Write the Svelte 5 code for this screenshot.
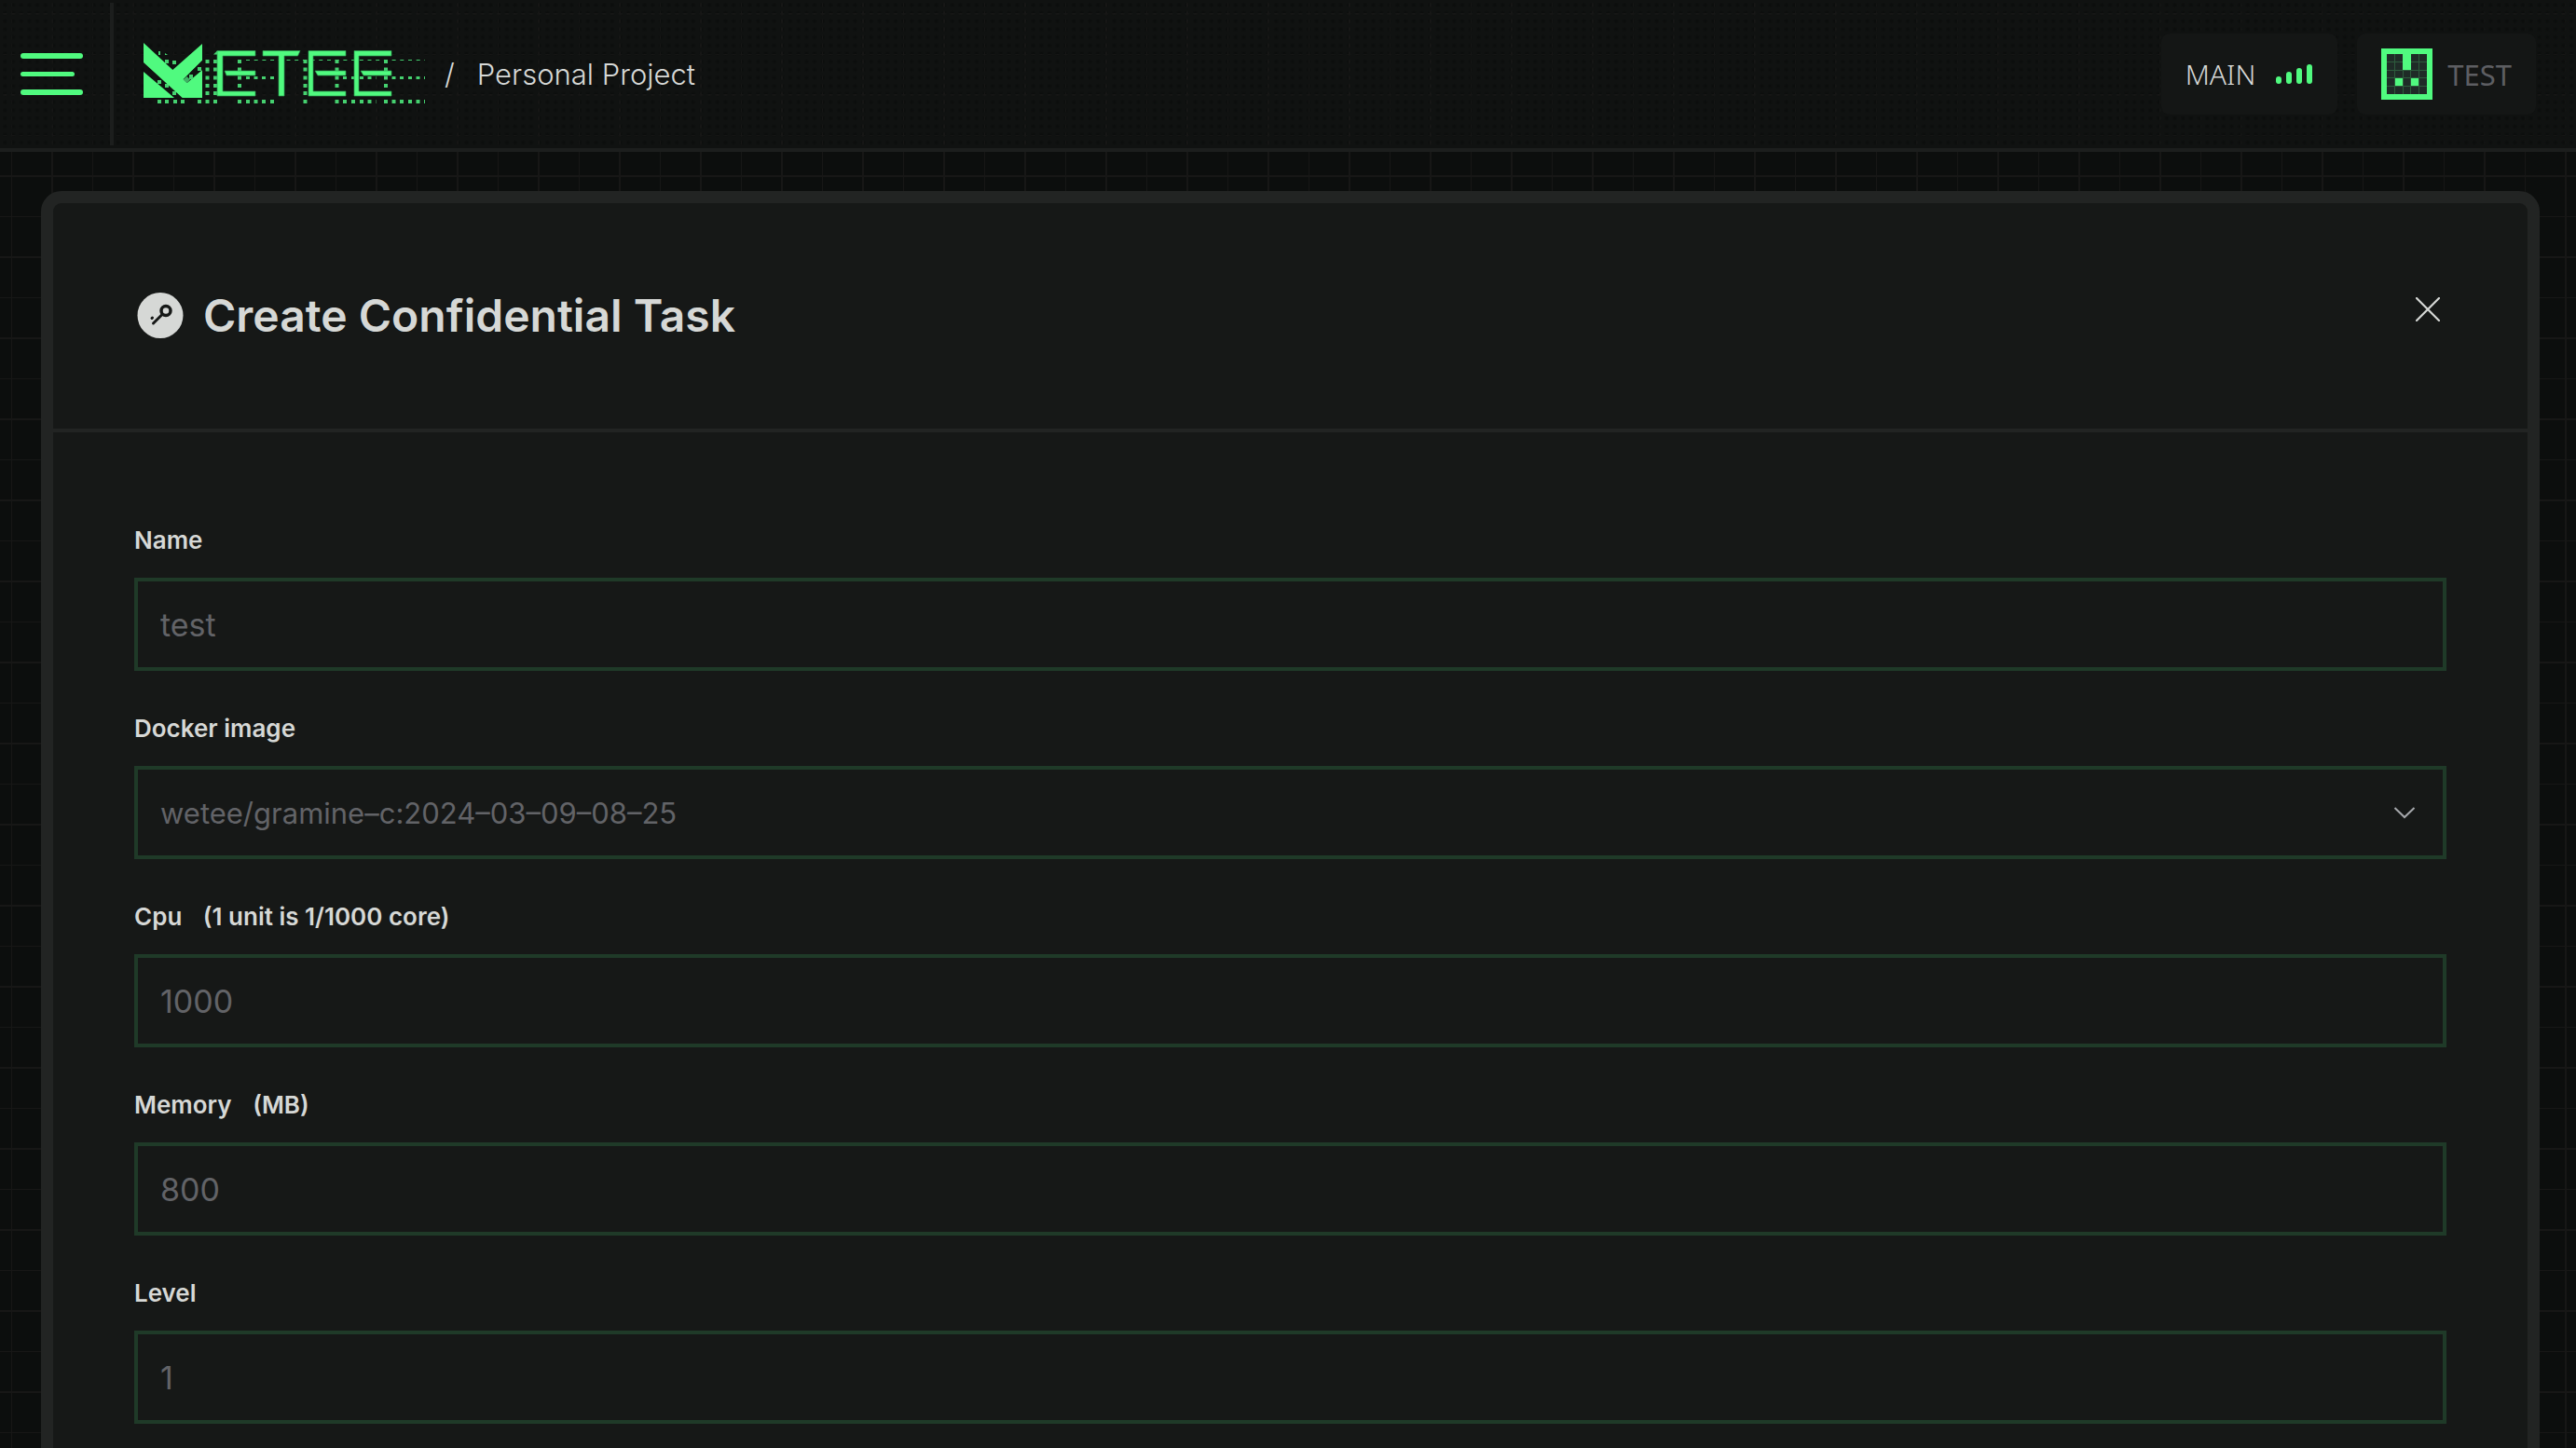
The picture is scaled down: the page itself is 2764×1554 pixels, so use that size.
<script>
  let name = $state('');
  let cpu = $state('');
  let memory = $state('');
  let level = $state('');
  let image = $state('wetee/gramine-c:2024-03-09-08-25');

  // Centres of the small squares that trail behind the logo
  const columns = [222.5, 231, 257, 327.5, 361.5, 414];
  const columnRows = [66, 74.5, 83.5, 92, 100];
  const baseline = [171, 179, 188, 196, 214, 222.5, 231, 257, 266, 274.5, 283, 292, 327.5, 361.5, 370, 379, 388, 396.5, 414, 422.5, 431, 440, 448.5];
  const middle = [266, 274.5, 283, 292, 370, 379, 388, 396.5, 422.5, 431, 440, 448.5];
  const scattered = [[179, 66], [187, 67], [171, 88], [179, 92], [187, 100], [214, 74], [205, 82]];
</script>

<div class="page">
  <header class="topbar">
    <button class="menu" aria-label="Menu">
      <svg width="68" height="46" viewBox="0 0 68 46"><g fill="#50fa7f"><rect width="67" height="6" rx="3" /><rect y="20" width="58" height="5" rx="2.5" /><rect y="39" width="67" height="6" rx="3" /></g></svg>
    </button>
    <a class="logo" href="/" aria-label="WETEE home">
      <svg width="304" height="69" viewBox="154 45 304 69">
        <g fill="#45d06f">
          {#each baseline as x}<rect x={x - 2} y="107" width="4" height="4" />{/each}
          {#each columns as x}
            {#each columnRows as y}<rect x={x - 2} y={y - 2} width="4" height="4" />{/each}
          {/each}
          {#each middle as x}<rect x={x - 2} y="82" width="4" height="3" />{/each}
          {#each scattered as [x, y]}<rect x={x - 2} y={y - 2} width="4" height="4" />{/each}
          <path d="M170 55h2v4h-2zM177 57l3 2h-3zM455 107h1v4h-1zM455 82h1v3h-1z" />
          <path opacity=".4" d="M403 107h1v4h-1zM403 82h1v3h-1z" />
        </g>
        <path d="M264 64.500h192" fill="none" stroke="#45d06f" stroke-dasharray="4 4.700" />
        <g fill="#50fa7f">
          <path d="M154 46l31.300 29L217 47v18l-20.300 20 4 4L217 75v30h-21.300L154 67z" />
          <path d="M154 77l33 28h-33z" />
        </g>
        <path fill="#101211" d="M217 65v10l-8 6-5-3z" />
        <path fill="#45d06f" d="M203 81h4v4h-4zM212 72h4v4h-4z" />
        <path fill="#3fb365" d="M196.500 85.500l4-3.500 3.500 3.500-3.500 3.500z" />
        <g fill="#50fa7f" stroke="#2c9c50" stroke-width=".7">
          <path d="M233 54.500h41v5.500h-35v38h35v5h-41zM241 76h33v5h-31zM282 54.500h40l-2.500 5.500H305v43h-6V60h-17zM331 54.500h40v5.500h-35v38h35v5h-40zM338 76h33v5h-30zM380 54.500h40v5.500h-35v38h35v5h-40zM387 76h33v5h-30z" />
        </g>
        <path fill="#45d06f" d="M229 58.500l4-4v4z" />
      </svg>
    </a>
    <nav class="crumbs"><span>/</span><a href="/project">Personal Project</a></nav>
    <button class="chip network">
      MAIN
      <svg width="40" height="22" viewBox="0 0 40 22"><g fill="#50fa7f"><rect y="13" width="6" height="8" rx="3" /><rect x="11" y="8" width="6" height="13" rx="3" /><rect x="22" y="4" width="6" height="17" rx="3" /><rect x="33" width="6" height="21" rx="3" /></g></svg>
    </button>
    <button class="chip account">
      <svg width="55" height="55" viewBox="0 0 55 55">
        <path fill="#50fa7f" d="M0 0h55v55H0z" /><path fill="#1f2b27" d="M6 6h43v43H6z" />
        <path stroke="#2d5b3c" d="M14.500 6v43M23.500 6v43M31.500 6v43M40.500 6v43M6 14.500h43M6 23.500h43M6 31.500h43M6 40.500h43" />
        <path fill="#50fa7f" d="M23 6h9v17h-9zM15 32h8v8h-8zM32 32h8v8h-8z" />
      </svg>
      TEST
    </button>
  </header>

  <div class="content">
    <main class="card">
      <div class="card-head">
        <svg width="50" height="50" viewBox="0 0 50 50">
          <circle cx="25" cy="24.500" r="24.500" fill="#d6d8d6" />
          <g fill="none" stroke="#161817" stroke-width="3" stroke-linecap="round"><circle cx="31" cy="19.500" r="5" stroke-width="3.500" /><path d="M27 23.500L17.500 33M16 27.500l.5-.5" /></g>
        </svg>
        <h1>Create Confidential Task</h1>
        <button class="close" aria-label="Close">
          <svg width="26" height="26" viewBox="0 0 26 26"><path d="M1 1l24 24M25 1L1 25" stroke="#d6d8d6" stroke-width="2.200" stroke-linecap="round" /></svg>
        </button>
      </div>
      <form class="form">
        <div class="field"><label for="name">Name</label><input id="name" placeholder="test" bind:value={name} /></div>
        <div class="field">
          <label for="image">Docker image</label>
          <div class="select">
            <select id="image" bind:value={image}><option value="wetee/gramine-c:2024-03-09-08-25">wetee/gramine–c:2024–03–09–08–25</option></select>
            <svg width="24" height="14" viewBox="0 0 24 14"><path d="M1.500 2L12 12 22.500 2" fill="none" stroke="#a5a7ab" stroke-width="2" /></svg>
          </div>
        </div>
        <div class="field"><label for="cpu">Cpu <span>(1 unit is 1/1000 core)</span></label><input id="cpu" placeholder="1000" bind:value={cpu} /></div>
        <div class="field"><label for="memory">Memory <span>(MB)</span></label><input id="memory" placeholder="800" bind:value={memory} /></div>
        <div class="field"><label for="level">Level</label><input id="level" placeholder="1" bind:value={level} /></div>
      </form>
    </main>
  </div>
</div>

<style>
  :global(body) { margin: 0; background: #0c0e0d; }
  .page {
    height: 100vh;
    display: flex;
    flex-direction: column;
    color: #d6d8d6;
    font-family: Inter, "Liberation Sans", sans-serif;
    background-color: #0c0e0d;
    background-image:
      linear-gradient(90deg, #171716 1px, transparent 1px 43px, #171716 43px 45px, transparent 45px),
      linear-gradient(#171716 1px, transparent 1px 43px, #171716 43px 45px, transparent 45px);
    background-size: 87px 87px;
    background-position: 12px 58px;
  }
  button { border: 0; padding: 0; background: none; color: inherit; font: inherit; cursor: pointer; }
  svg { display: block; flex: none; }
  .topbar {
    flex: none;
    height: 159px;
    border-bottom: 4px solid #1c1e1d;
    display: flex;
    align-items: center;
    padding-right: 43px;
    background-image: radial-gradient(circle, transparent 1px, #101211 3px);
    background-size: calc(87px / 10) calc(87px / 10);
    background-position: 1px 1px;
  }
  .menu { box-sizing: border-box; width: 122px; height: 153px; padding-left: 22px; border-right: 4px solid #1c1e1d; }
  .logo { margin-left: 32px; }
  .crumbs { display: flex; gap: 24px; margin-left: 19px; flex: 1; font-size: 31px; line-height: 40px; font-weight: 300; }
  .crumbs a { color: inherit; text-decoration: none; }
  .chip { display: flex; align-items: center; height: 87px; border-radius: 9px; background: #141615; padding: 0 26px; font-family: "Noto Sans", sans-serif; font-weight: 300; }
  .network { gap: 22px; font-size: 30px; }
  .account { gap: 16px; margin-left: 21px; font-size: 31px; font-weight: 400; color: #5d5e62; }
  .content { flex: 1; min-height: 0; overflow-y: auto; scrollbar-width: none; padding: 42px 39px 0 44px; }
  .card { border: 13px solid #222423; border-radius: 22px; background: #161817; }
  .card-head { height: 242px; border-bottom: 4px solid #222423; display: flex; align-items: center; padding: 0 94px 0 90px; }
  h1 { margin: 0 auto 0 21px; font-size: 48px; line-height: 60px; font-weight: 600; }
  .close { margin-bottom: 14px; }
  .form { padding: 96px 87px 60px; display: flex; flex-direction: column; gap: 42px; }
  .field { display: flex; flex-direction: column; gap: 20px; }
  label { font-size: 26px; line-height: 40px; font-weight: 600; }
  label span { margin-left: 16px; }
  input, select {
    box-sizing: border-box; width: 100%; height: 100px; border: 4px solid #1f3a28; border-radius: 0;
    background: transparent; color: #626367; padding: 0 24px; font: 400 34px Inter, "Liberation Sans", sans-serif; outline: 0; appearance: none;
  }
  input::placeholder { color: #626367; opacity: 1; }
  select { font-size: 31px; }
  .select { display: grid; align-items: center; }
  .select > * { grid-area: 1 / 1; }
  .select svg { justify-self: end; margin-right: 33px; pointer-events: none; }
</style>
